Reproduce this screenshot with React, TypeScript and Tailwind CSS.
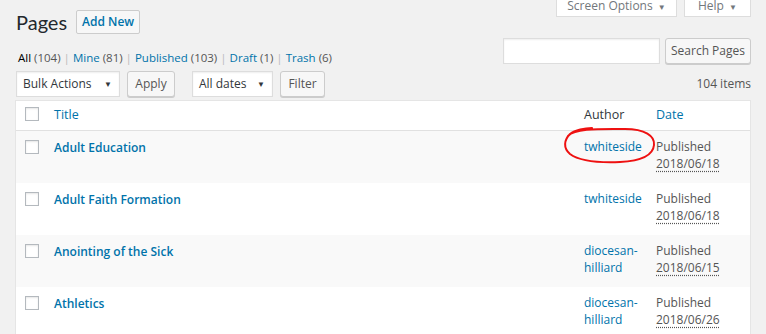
import React from 'react';

type Row = {
  title: string;
  author: string;
  date: string;
};

const rows: Row[] = [
  { title: 'Adult Education', author: 'twhiteside', date: '2018/06/18' },
  { title: 'Adult Faith Formation', author: 'twhiteside', date: '2018/06/18' },
  { title: 'Anointing of the Sick', author: 'diocesan-hilliard', date: '2018/06/15' },
  { title: 'Athletics', author: 'diocesan-hilliard', date: '2018/06/26' },
];

function Checkbox() {
  return <div className="w-[14px] h-[14px] border border-[#b4b9be] bg-white shadow-[inset_0_1px_2px_rgba(0,0,0,0.1)]" />;
}

function Button({ children, className = '' }: { children: React.ReactNode; className?: string }) {
  return (
    <div
      className={`h-[26px] flex items-center justify-center border border-[#ccc] rounded-[3px] bg-[#f7f7f7] text-[#555] shadow-[0_1px_0_#ccc] ${className}`}
    >
      {children}
    </div>
  );
}

function Select({ label, width }: { label: string; width: string }) {
  return (
    <div className={`h-[26px] ${width} flex items-center justify-between pl-[6px] pr-[7px] border border-[#ddd] bg-white text-[#32373c] shadow-[inset_0_1px_2px_rgba(0,0,0,0.07)]`}>
      <span>{label}</span>
      <span className="text-[8px] text-[#32373c]">▼</span>
    </div>
  );
}

export default function App() {
  return (
    <div className="relative w-[766px] h-[334px] overflow-hidden bg-[#f1f1f1] text-[12px] text-[#444] font-['Segoe_UI','Open_Sans',sans-serif]">
      {/* title row + screen meta tabs */}
      <div className="flex items-start justify-between pl-[16px] pr-[15px]">
        <div className="flex items-center gap-[9px] mt-[10px]">
          <h1 className="text-[20px] leading-[24px] text-[#23282d] font-['Segoe_UI','Lato',sans-serif]">Pages</h1>
          <div className="w-[64px] h-[24px] flex items-center justify-center border border-[#ccc] rounded-[2px] bg-[#f7f7f7] text-[#0073aa] font-semibold">
            Add New
          </div>
        </div>
        <div className="flex gap-[7px]">
          <div className="w-[121px] h-[17px] overflow-hidden border border-t-0 border-[#ddd] bg-white text-[#72777c]">
            <div className="-mt-[4px] leading-[20px] text-center">
              Screen Options <span className="text-[8px] ml-[2px]">▼</span>
            </div>
          </div>
          <div className="w-[67px] h-[17px] overflow-hidden border border-t-0 border-[#ddd] bg-white text-[#72777c]">
            <div className="-mt-[4px] leading-[20px] text-center">
              Help <span className="text-[8px] ml-[2px]">▼</span>
            </div>
          </div>
        </div>
      </div>

      {/* views + search */}
      <div className="flex justify-between items-start mt-[4px] pl-[18px] pr-[15px]">
        <div className="pt-[10px] leading-[20px] text-[11.5px] text-[#555]">
          <span className="text-black">All</span> (104)
          <span className="text-[#bbb] mx-[3px]">|</span>
          <span className="text-[#0073aa]">Mine</span> (81)
          <span className="text-[#bbb] mx-[3px]">|</span>
          <span className="text-[#0073aa]">Published</span> (103)
          <span className="text-[#bbb] mx-[3px]">|</span>
          <span className="text-[#0073aa]">Draft</span> (1)
          <span className="text-[#bbb] mx-[3px]">|</span>
          <span className="text-[#0073aa]">Trash</span> (6)
        </div>
        <div className="flex gap-[5px]">
          <div className="w-[157px] h-[26px] border border-[#ddd] bg-white shadow-[inset_0_1px_2px_rgba(0,0,0,0.07)]" />
          <Button className="w-[86px]">Search Pages</Button>
        </div>
      </div>

      {/* tablenav */}
      <div className="flex items-center justify-between mt-[3px] pl-[16px] pr-[15px]">
        <div className="flex items-center">
          <Select label="Bulk Actions" width="w-[104px]" />
          <Button className="ml-[7px] w-[48px]">Apply</Button>
          <Select label="All dates" width="w-[81px] ml-[17px]" />
          <Button className="ml-[7px] w-[45px]">Filter</Button>
        </div>
        <div className="text-[#555]">104 items</div>
      </div>

      {/* list table */}
      <div className="mt-[3px] mx-[15px] border border-[#e5e5e5] bg-white">
        <div className="grid grid-cols-[28px_1fr_72px_104px] h-[30px] border-b border-[#e1e1e1]">
          <div className="pl-[9px] pt-[6px]">
            <Checkbox />
          </div>
          <div className="pl-[10px] pt-[4px] leading-[20px] text-[12.5px] text-[#0073aa]">Title</div>
          <div className="pl-[10px] pt-[4px] leading-[20px] text-[12.5px] text-[#32373c]">Author</div>
          <div className="pl-[10px] pt-[4px] leading-[20px] text-[12.5px] text-[#0073aa]">Date</div>
        </div>
        {rows.map((r, i) => (
          <div
            key={r.title}
            className={`grid grid-cols-[28px_1fr_72px_104px] h-[52px] ${i % 2 === 0 ? 'bg-[#f9f9f9]' : 'bg-white'}`}
          >
            <div className="pl-[9px] pt-[9px]">
              <Checkbox />
            </div>
            <div className="pl-[10px] pt-[7px] leading-[20px] text-[12px] font-semibold text-[#0073aa]">{r.title}</div>
            <div className="pl-[10px] pr-[2px] pt-[7px] leading-[17px] text-[#0073aa]">{r.author}</div>
            <div className="pl-[10px] pt-[7px] leading-[17px] text-[#555]">
              Published
              <br />
              <span className="underline decoration-dotted decoration-[#555] underline-offset-[3px]">{r.date}</span>
            </div>
          </div>
        ))}
      </div>

      {/* red hand-drawn annotation */}
      <svg className="absolute left-0 top-0 pointer-events-none" width="766" height="334">
        <path
          d="M 568 136 C 575 128, 600 129, 625 129 C 645 129, 655 136, 654 145 C 653 156, 640 161, 620 162 C 595 163, 578 160, 570 154 C 563 148, 564 140, 570 134 C 575 130, 585 128, 592 128"
          fill="none"
          stroke="#e11"
          strokeWidth="2"
          strokeLinecap="round"
        />
      </svg>
    </div>
  );
}
